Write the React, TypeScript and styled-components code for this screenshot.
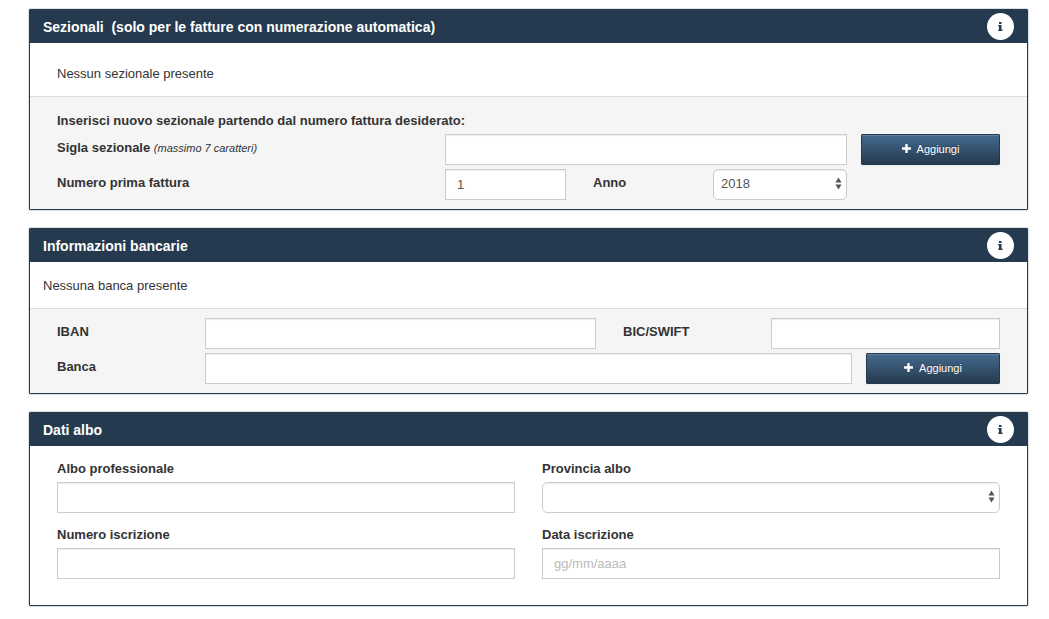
import React, { useId, useState } from "react";
import styled, { createGlobalStyle } from "styled-components";

const navy = "#253a4e";
const line = "#cccccc";

const GlobalStyle = createGlobalStyle`
  *, *::before, *::after { box-sizing: border-box; }
  body {
    margin: 0;
    background: #ffffff;
    color: #333333;
    font-family: "Liberation Sans", Arial, sans-serif;
    font-size: 13px;
    line-height: 18px;
  }
`;

const Page = styled.main`
  display: flex;
  flex-direction: column;
  gap: 18px;
  padding: 9px 21px 13px 29px;
`;

const PanelBox = styled.section`
  border: 1px solid ${navy};
  border-radius: 1px;
  box-shadow: 0 0 0 1px #dbe0e5;
  background: #ffffff;
`;

const PanelHeader = styled.header`
  display: flex;
  align-items: center;
  justify-content: space-between;
  height: 33px;
  padding: 0 13px;
  background: ${navy};
`;

const PanelTitle = styled.h2`
  margin: 0;
  color: #ffffff;
  font-size: 14px;
  font-weight: bold;
  line-height: 18px;
  white-space: pre;
`;

const InfoButton = styled.button`
  display: flex;
  align-items: center;
  justify-content: center;
  width: 27px;
  height: 27px;
  padding: 0;
  border: 0;
  border-radius: 50%;
  background: #ffffff;
  color: ${navy};
  cursor: pointer;
`;

const EmptyNote = styled.p<{ $indented?: boolean }>`
  margin: 0;
  padding: ${(p) => (p.$indented ? "22px 27px 13px" : "15px 13px 13px")};
`;

const EntryArea = styled.form`
  display: flex;
  flex-direction: column;
  gap: 4px;
  padding: 9px 27px;
  border-top: 1px solid #dddddd;
  background: #f5f5f5;
`;

const Intro = styled.p`
  margin: 0;
  padding-top: 6px;
  font-weight: bold;
`;

const Row = styled.div<{ $columns: string }>`
  display: grid;
  grid-template-columns: ${(p) => p.$columns};
  align-items: start;
`;

const RowLabel = styled.label<{ $inset?: boolean }>`
  padding: 5px 0 0 ${(p) => (p.$inset ? "27px" : "0")};
  font-weight: bold;
`;

const Hint = styled.em`
  font-size: 11px;
  font-weight: normal;
`;

const TextInput = styled.input`
  display: block;
  width: 100%;
  min-width: 0;
  height: 31px;
  padding: 4px 11px;
  border: 1px solid ${line};
  border-radius: 0;
  background: #ffffff;
  box-shadow: inset 0 1px 1px rgba(0, 0, 0, 0.075);
  color: #555555;
  font: inherit;
  &::placeholder { color: #bbbbbb; opacity: 1; }
`;

const SelectFrame = styled.div`
  position: relative;
`;

const SelectInput = styled.select`
  display: block;
  width: 100%;
  height: 31px;
  padding: 0 20px 2px 7px;
  border: 1px solid ${line};
  border-radius: 5px;
  background: #ffffff;
  box-shadow: inset 0 1px 1px rgba(0, 0, 0, 0.075);
  color: #555555;
  font: inherit;
  appearance: none;
`;

const SelectArrows = styled.svg`
  position: absolute;
  top: 8px;
  right: 5px;
  pointer-events: none;
`;

const AddButton = styled.button`
  display: flex;
  align-items: center;
  justify-content: center;
  gap: 6px;
  height: 31px;
  margin-left: 14px;
  padding: 0 0 2px;
  border: 1px solid ${navy};
  border-radius: 1px;
  background: linear-gradient(#446a8e, ${navy});
  box-shadow: inset 0 1px 0 rgba(255, 255, 255, 0.15), 0 1px 2px rgba(0, 0, 0, 0.05);
  color: #ffffff;
  font-family: inherit;
  font-size: 11px;
  line-height: 18px;
  text-shadow: 0 -1px 0 rgba(0, 0, 0, 0.25);
  cursor: pointer;
`;

const AlboForm = styled.form`
  display: grid;
  grid-template-columns: 1fr 1fr;
  gap: 13px 27px;
  padding: 14px 27px 26px;
`;

const Field = styled.div`
  display: flex;
  flex-direction: column;
  gap: 4px;
`;

const FieldLabel = styled.label`
  font-weight: bold;
`;

function InfoIcon() {
  return (
    <svg width="5" height="9" viewBox="0 0 5 9" fill="currentColor" aria-hidden="true">
      <path d="M1 0h2.500v2H1zM.3 3h3.200v4.500h1V9H.3V7.500H1v-3H.3z" />
    </svg>
  );
}

function PlusIcon() {
  return (
    <svg width="9" height="9" viewBox="0 0 9 9" fill="currentColor" aria-hidden="true">
      <path d="M3.700 0h1.600q.4 0 .4.4v2.900h2.900q.4 0 .4.4v1.600q0 .4-.4.4H5.700v2.900q0 .4-.4.4H3.700q-.4 0-.4-.4V5.700H.4Q0 5.700 0 5.300V3.700q0-.4.4-.4h2.900V.4q0-.4.4-.4z" />
    </svg>
  );
}

function Select({ id, options }: { id: string; options: string[] }) {
  return (
    <SelectFrame>
      <SelectInput id={id}>
        {options.map((o) => (
          <option key={o}>{o}</option>
        ))}
      </SelectInput>
      <SelectArrows width="7" height="13" viewBox="0 0 7 13" fill="#555555" aria-hidden="true">
        <path d="M3.500 .5l3 5h-6zM3.500 12.500l3-5h-6z" />
      </SelectArrows>
    </SelectFrame>
  );
}

function Add() {
  return (
    <AddButton type="button">
      <PlusIcon />
      Aggiungi
    </AddButton>
  );
}

function Panel({ title, children }: { title: string; children: React.ReactNode }) {
  const id = useId();
  return (
    <PanelBox aria-labelledby={id}>
      <PanelHeader>
        <PanelTitle id={id}>{title}</PanelTitle>
        <InfoButton type="button" aria-label="Informazioni">
          <InfoIcon />
        </InfoButton>
      </PanelHeader>
      {children}
    </PanelBox>
  );
}

export default function App() {
  const [numero, setNumero] = useState("1");
  return (
    <>
      <GlobalStyle />
      <Page>
        <Panel title="Sezionali  (solo per le fatture con numerazione automatica)">
          <EmptyNote $indented>Nessun sezionale presente</EmptyNote>
          <EntryArea>
            <Intro>Inserisci nuovo sezionale partendo dal numero fattura desiderato:</Intro>
            <Row $columns="388fr 402fr 153fr">
              <RowLabel htmlFor="sigla">
                Sigla sezionale <Hint>(massimo 7 caratteri)</Hint>
              </RowLabel>
              <TextInput id="sigla" maxLength={7} />
              <Add />
            </Row>
            <Row $columns="388fr 121fr 147fr 134fr 153fr">
              <RowLabel htmlFor="numero">Numero prima fattura</RowLabel>
              <TextInput id="numero" value={numero} onChange={(e) => setNumero(e.target.value)} />
              <RowLabel htmlFor="anno" $inset>
                Anno
              </RowLabel>
              <Select id="anno" options={["2018", "2019"]} />
            </Row>
          </EntryArea>
        </Panel>

        <Panel title="Informazioni bancarie">
          <EmptyNote>Nessuna banca presente</EmptyNote>
          <EntryArea>
            <Row $columns="148fr 391fr 175fr 229fr">
              <RowLabel htmlFor="iban">IBAN</RowLabel>
              <TextInput id="iban" />
              <RowLabel htmlFor="bic" $inset>
                BIC/SWIFT
              </RowLabel>
              <TextInput id="bic" />
            </Row>
            <Row $columns="148fr 647fr 148fr">
              <RowLabel htmlFor="banca">Banca</RowLabel>
              <TextInput id="banca" />
              <Add />
            </Row>
          </EntryArea>
        </Panel>

        <Panel title="Dati albo">
          <AlboForm>
            <Field>
              <FieldLabel htmlFor="albo">Albo professionale</FieldLabel>
              <TextInput id="albo" />
            </Field>
            <Field>
              <FieldLabel htmlFor="provincia">Provincia albo</FieldLabel>
              <Select id="provincia" options={[""]} />
            </Field>
            <Field>
              <FieldLabel htmlFor="iscrizione">Numero iscrizione</FieldLabel>
              <TextInput id="iscrizione" />
            </Field>
            <Field>
              <FieldLabel htmlFor="data">Data iscrizione</FieldLabel>
              <TextInput id="data" placeholder="gg/mm/aaaa" />
            </Field>
          </AlboForm>
        </Panel>
      </Page>
    </>
  );
}
